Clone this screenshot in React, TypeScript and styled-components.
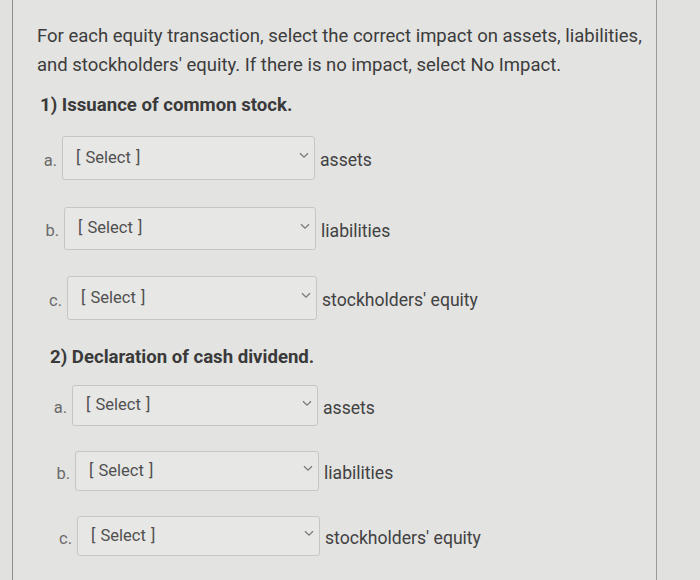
import React from "react";
import styled, { createGlobalStyle } from "styled-components";

const Global = createGlobalStyle`
  html, body { margin: 0; padding: 0; background: #e1e1df; }
  body { font-family: Roboto, "Liberation Sans", Arial, sans-serif; color: #3a3a3a; }
`;

const Page = styled.div`
  width: 700px;
  height: 580px;
  overflow: hidden;
  background: #e1e1df;
`;

const Frame = styled.div`
  margin-left: 12px;
  width: 643px;
  height: 580px;
  border-left: 1px solid #8e8e8c;
  border-right: 1px solid #9a9a98;
  display: flex;
  flex-direction: column;
  background: #e3e3e1;
`;

const Intro = styled.p`
  margin: 22px 0 0 24px;
  font-size: 18.5px;
  line-height: 29px;
  color: #3c3c3c;
  white-space: nowrap;
`;

const Heading = styled.h2<{ $indent: number; $top: number }>`
  margin: ${(p) => p.$top}px 0 0 ${(p) => p.$indent}px;
  font-size: 18.6px;
  line-height: 22px;
  font-weight: 700;
  color: #3a3a3a;
`;

const Row = styled.div<{ $indent: number; $top: number }>`
  display: flex;
  align-items: center;
  margin-top: ${(p) => p.$top}px;
  padding-left: ${(p) => p.$indent}px;
`;

const Letter = styled.span`
  width: 19px;
  padding-right: 5px;
  box-sizing: border-box;
  text-align: right;
  font-size: 16.5px;
  color: #6a6a6a;
  position: relative;
  top: 2px;
`;

const SelectBox = styled.div<{ $w: number; $h: number }>`
  width: ${(p) => p.$w}px;
  height: ${(p) => p.$h}px;
  box-sizing: border-box;
  border: 1px solid #c6c6c4;
  border-radius: 3px;
  background: #e7e7e5;
  display: flex;
  align-items: center;
  padding: 0 5px 2px 13px;
`;

const Placeholder = styled.span`
  flex: 1;
  font-size: 16.5px;
  color: #505050;
  word-spacing: 1px;
`;

const Chevron = styled.svg`
  width: 10px;
  height: 7px;
  margin-bottom: 3px;
`;

const Target = styled.span`
  margin-left: 5px;
  font-size: 17.6px;
  color: #414141;
  position: relative;
  top: 2px;
`;

type Item = { letter: string; target: string; indent: number; top: number; w: number; h: number };

const group1: Item[] = [
  { letter: "a.", target: "assets", indent: 30, top: 20, w: 253, h: 44 },
  { letter: "b.", target: "liabilities", indent: 32, top: 27, w: 252, h: 43 },
  { letter: "c.", target: "stockholders' equity", indent: 35, top: 26, w: 250, h: 44 },
];

const group2: Item[] = [
  { letter: "a.", target: "assets", indent: 40, top: 17, w: 246, h: 41 },
  { letter: "b.", target: "liabilities", indent: 43, top: 25, w: 244, h: 40 },
  { letter: "c.", target: "stockholders' equity", indent: 45, top: 25, w: 243, h: 40 },
];

const SelectRow = ({ item }: { item: Item }) => (
  <Row $indent={item.indent} $top={item.top}>
    <Letter>{item.letter}</Letter>
    <SelectBox $w={item.w} $h={item.h}>
      <Placeholder>[ Select ]</Placeholder>
      <Chevron viewBox="0 0 10 7">
        <path d="M1 1.2 L5 5.2 L9 1.2" fill="none" stroke="#7a7a7a" strokeWidth="1.3" />
      </Chevron>
    </SelectBox>
    <Target>{item.target}</Target>
  </Row>
);

export default function App() {
  return (
    <Page>
      <Global />
      <Frame>
        <Intro>
          For each equity transaction, select the correct impact on assets, liabilities,
          <br />
          and stockholders' equity. If there is no impact, select No Impact.
        </Intro>
        <Heading $indent={27} $top={14}>1) Issuance of common stock.</Heading>
        {group1.map((it) => (
          <SelectRow key={"1" + it.letter} item={it} />
        ))}
        <Heading $indent={37} $top={26}>2) Declaration of cash dividend.</Heading>
        {group2.map((it) => (
          <SelectRow key={"2" + it.letter} item={it} />
        ))}
      </Frame>
    </Page>
  );
}
